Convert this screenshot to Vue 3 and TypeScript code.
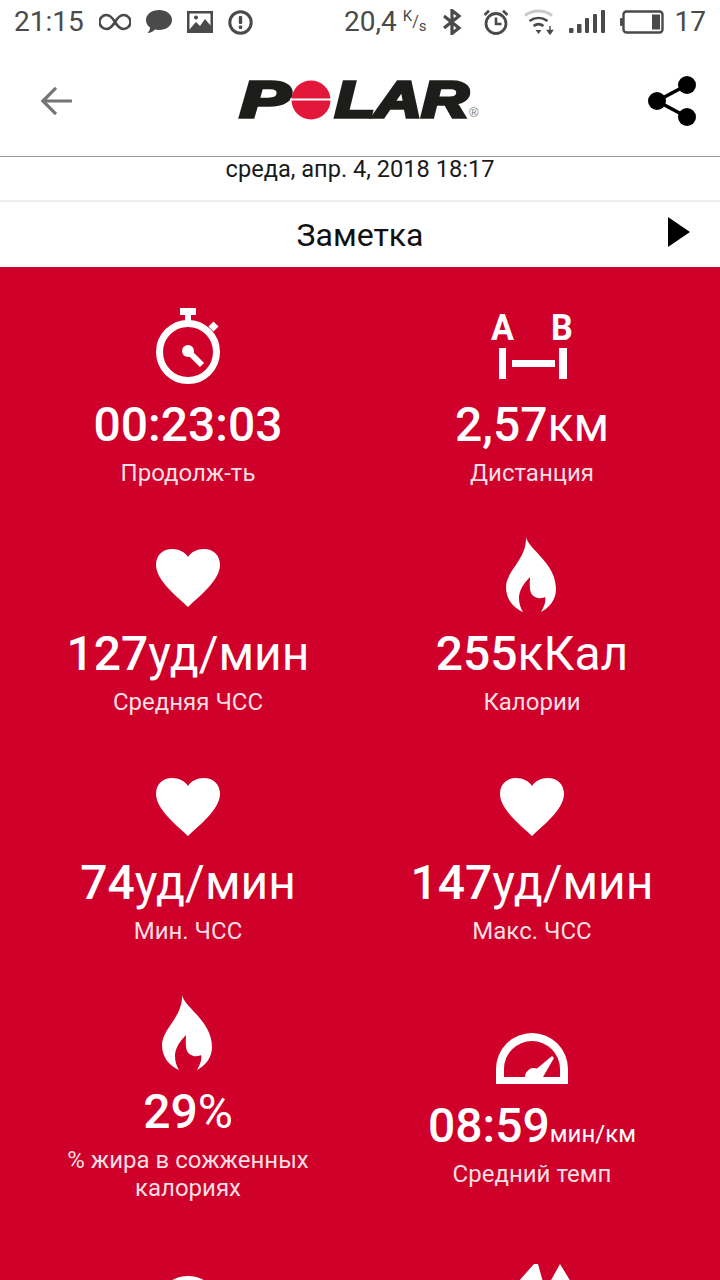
<script setup lang="ts">
interface Metric {
  icon: string;
  value?: string;
  unit?: string;
  smallUnit?: boolean;
  label?: string;
}

const metrics: Metric[] = [
  { icon: "watch", value: "00:23:03", label: "Продолж-ть" },
  { icon: "dist", value: "2,57", unit: "км", label: "Дистанция" },
  { icon: "heart", value: "127", unit: "уд/мин", label: "Средняя ЧСС" },
  { icon: "flame", value: "255", unit: "кКал", label: "Калории" },
  { icon: "heart", value: "74", unit: "уд/мин", label: "Мин. ЧСС" },
  { icon: "heart", value: "147", unit: "уд/мин", label: "Макс. ЧСС" },
  { icon: "flame", value: "29", unit: "%", label: "% жира в сожженных калориях" },
  { icon: "gauge", value: "08:59", unit: "мин/км", smallUnit: true, label: "Средний темп" },
  { icon: "ring" },
  { icon: "peaks" },
];
</script>

<template>
  <div class="screen">
    <div class="status">
      <div class="status-left">
        <span class="status-text">21:15</span>
        <svg class="ic" width="32" height="20" viewBox="0 0 32 20" fill="none" stroke="#4a4a4a" stroke-width="2.6">
          <path d="M16 10C13 5 10 3 7.500 3A7 7 0 0 0 7.500 17C10 17 13 15 16 10C19 5 22 3 24.500 3A7 7 0 0 1 24.500 17C22 17 19 15 16 10Z" />
        </svg>
        <svg class="ic" width="26" height="26" viewBox="0 0 26 26" fill="#4a4a4a">
          <path d="M13 1C20 1 26 5 26 11C26 17 20 21 13 21C11.500 21 10 20.800 9 20.500C7 22.500 4.500 24 1.500 24C3 22.500 4 20.500 4 18.500C1.500 16.500 0 14 0 11C0 5 6 1 13 1Z" />
        </svg>
        <svg class="ic" width="26" height="22" viewBox="0 0 26 22">
          <path fill="#4a4a4a" fill-rule="evenodd" d="M0 0H26V22H0ZM2.500 2.500V19.500H23.500V2.500Z" />
          <path fill="#4a4a4a" d="M2 19L9 11L13 15L18 8L24 15V20H2Z" />
          <circle cx="9" cy="6.500" r="2" fill="#4a4a4a" />
        </svg>
        <svg class="ic" width="25" height="25" viewBox="0 0 25 25">
          <circle cx="12.500" cy="12.500" r="10.700" fill="none" stroke="#4a4a4a" stroke-width="3" />
          <rect x="10.800" y="6" width="3.400" height="8" rx="1" fill="#4a4a4a" />
          <rect x="10.800" y="15.500" width="3.400" height="3.400" rx="1" fill="#4a4a4a" />
        </svg>
      </div>
      <div class="status-right">
        <span class="status-text speed">20,4<span class="speed-unit"><sup>K</sup>/<sub>s</sub></span></span>
        <svg class="ic" width="20" height="26" viewBox="0 0 20 26" fill="none" stroke="#4a4a4a" stroke-width="3.200">
          <path d="M2 7L17 19L10 24.500V1.500L17 7L2 19" />
        </svg>
        <svg class="ic alarm" width="26" height="26" viewBox="0 0 26 26" fill="none" stroke="#4a4a4a">
          <circle cx="13" cy="14.500" r="10" stroke-width="2.800" />
          <path d="M13 8.500V15H18.500" stroke-width="2.600" />
          <path d="M1.500 6L6 1.800M24.500 6L20 1.800" stroke-width="2.600" />
        </svg>
        <svg class="ic" width="30" height="26" viewBox="0 0 30 26" fill="none">
          <path d="M1 6.500C9 0.500 20 0.500 28 6.500" stroke="#c9c9c9" stroke-width="3" />
          <path d="M5.500 12C11 8 18 8 23.500 12M9.500 17C12.500 14.800 16.500 14.800 19.500 17" stroke="#4a4a4a" stroke-width="2.600" />
          <path d="M11.500 21H17.500L14.500 25Z" fill="#4a4a4a" />
          <path d="M26 17V23M23.500 21.500H28.500L26 25Z" stroke="#4a4a4a" stroke-width="1.400" fill="#4a4a4a" />
        </svg>
        <svg class="ic" width="36" height="24" viewBox="0 0 36 24" fill="#4a4a4a">
          <rect x="0" y="18" width="4.500" height="5" rx="1" />
          <rect x="8" y="14" width="4.500" height="9" rx="1" />
          <rect x="16" y="8" width="4" height="15" rx="1" />
          <rect x="24" y="4" width="4" height="19" rx="1" />
          <rect x="32" y="0" width="4" height="23" rx="1" />
        </svg>
        <svg class="ic" width="44" height="24" viewBox="0 0 44 24">
          <rect x="3.500" y="1.500" width="39" height="21" rx="3" fill="none" stroke="#4a4a4a" stroke-width="2.400" />
          <rect x="0" y="8" width="3" height="8" rx="1" fill="#4a4a4a" />
          <rect x="32" y="4.500" width="8" height="15" fill="#4a4a4a" />
        </svg>
        <span class="status-text batt-level">17</span>
      </div>
    </div>

    <header class="topbar">
      <svg class="back" width="32" height="30" viewBox="0 0 34 32" fill="none" stroke="#757575" stroke-width="3.400">
        <path d="M34 16H3M17 2L3 16L17 30" />
      </svg>
      <svg class="logo" width="240" height="44" viewBox="0 0 240 44">
        <text transform="translate(0 38) scale(1.500 1)" class="logo-text">P</text>
        <circle cx="71" cy="21" r="19.500" fill="#e2173a" />
        <rect x="50" y="19.500" width="42" height="2" fill="#fff" />
        <text transform="translate(95 38) scale(1.300 1)" class="logo-text">LAR</text>
        <text x="229" y="38" class="logo-mark">®</text>
      </svg>
      <svg class="share" width="48" height="50" viewBox="0 0 48 50" fill="#000">
        <circle cx="39" cy="9" r="9" />
        <circle cx="9" cy="25" r="9" />
        <circle cx="39" cy="41" r="9" />
        <path d="M39 9L9 25L39 41" fill="none" stroke="#000" stroke-width="3.500" />
      </svg>
    </header>

    <div class="date-row">среда, апр. 4, 2018 18:17</div>

    <div class="note-row">
      <span>Заметка</span>
      <svg class="note-arrow" width="22" height="30" viewBox="0 0 22 30"><path d="M0 0L22 15L0 30Z" /></svg>
    </div>

    <main class="grid">
      <div v-for="(m, i) in metrics" :key="i" class="cell">
        <svg class="cell-icon" width="80" height="80" viewBox="0 0 80 80">
          <template v-if="m.icon === 'watch'">
            <circle cx="40" cy="46" r="28.500" fill="none" stroke="#fff" stroke-width="7" />
            <rect x="32" y="2" width="16" height="7" fill="#fff" />
            <rect x="37" y="9" width="6" height="10" fill="#fff" />
            <path d="M63 23L68 18" stroke="#fff" stroke-width="7" />
            <circle cx="40" cy="45" r="6" fill="#fff" />
            <path d="M40 45L54 59" stroke="#fff" stroke-width="6" />
          </template>
          <template v-else-if="m.icon === 'dist'">
            <text transform="translate(-1 34) scale(0.950 1)" class="ab">A</text>
            <text transform="translate(59 34) scale(0.950 1)" class="ab">B</text>
            <rect x="7" y="42" width="7" height="31" fill="#fff" />
            <rect x="67" y="42" width="8" height="31" fill="#fff" />
            <rect x="20" y="54" width="43" height="7" fill="#fff" />
          </template>
          <path v-else-if="m.icon === 'heart'" fill="#fff" d="M40 72C32 64 8 46 8 30C8 20 15 14 24 14C31 14 37 17 40 22C43 17 49 14 56 14C65 14 72 20 72 30C72 46 48 64 40 72Z" />
          <path v-else-if="m.icon === 'flame'" fill="#fff" d="M34 2C36 14 64 28 64 54C64 65 57 73 49 77C53 70 54 66 53 62C50 64 42 64 39 58C37 52 38 46 38 42C31 49 27 56 27 63C27 68 28 72 31 77C22 73 14 65 14 52C14 36 35 24 34 2Z" />
          <template v-else-if="m.icon === 'gauge'">
            <path fill="#fff" fill-rule="evenodd" d="M4 77V62A36 36 0 0 1 76 62V77ZM12 70H68V62A28 28 0 0 0 12 62Z" />
            <path fill="#fff" d="M33 70A9 9 0 0 1 45 61.500L60 49L62 51L51 70Z" />
          </template>
          <circle v-else-if="m.icon === 'ring'" cx="40" cy="58" r="29" fill="none" stroke="#fff" stroke-width="6" />
          <path v-else fill="#fff" d="M42 14H46L51 32H26ZM68 14L79 32H58Z" />
        </svg>
        <div v-if="m.value" class="value">
          <span class="num">{{ m.value }}</span><span class="unit" :class="{ small: m.smallUnit }">{{ m.unit }}</span>
        </div>
        <div v-if="m.label" class="label">{{ m.label }}</div>
      </div>
    </main>
  </div>
</template>

<style scoped>
.screen {
  width: 720px;
  height: 1280px;
  overflow: hidden;
  background: #fff;
  font-family: Roboto, "Noto Sans", sans-serif;
  display: flex;
  flex-direction: column;
}
.status {
  height: 45px;
  flex: none;
  display: flex;
  align-items: center;
  justify-content: space-between;
  padding: 0 14px 1px;
  box-sizing: border-box;
  color: #4a4a4a;
}
.status-left,
.status-right {
  display: flex;
  align-items: center;
  gap: 15px;
}
.status-text {
  font-size: 28px;
  line-height: 44px;
  white-space: nowrap;
}
.batt-level {
  margin-left: -4px;
}
.speed {
  display: flex;
  align-items: center;
  gap: 6px;
}
.speed-unit {
  font-size: 16px;
  line-height: 1;
}
.speed-unit sup,
.speed-unit sub {
  font-size: 15px;
  line-height: 0;
}
.alarm {
  margin-left: 6px;
}
.topbar {
  height: 112px;
  flex: none;
  box-sizing: border-box;
  display: flex;
  align-items: center;
  justify-content: space-between;
  padding: 0 24px 0 40px;
  border-bottom: 1px solid #9a9a9a;
}
.logo {
  overflow: visible;
}
.logo-text {
  font-family: "Liberation Sans", sans-serif;
  font-weight: 700;
  font-style: italic;
  font-size: 50px;
  fill: #1d1d1b;
  stroke: #1d1d1b;
  stroke-width: 3.500px;
}
.logo-mark {
  font-family: "Liberation Sans", sans-serif;
  font-size: 13px;
  fill: #777;
}
.date-row {
  height: 45px;
  flex: none;
  box-sizing: border-box;
  text-align: center;
  font-size: 23.600px;
  line-height: 24px;
  color: #1a1a1a;
  border-bottom: 2px solid #eeeeee;
}
.note-row {
  height: 65px;
  flex: none;
  box-sizing: border-box;
  display: flex;
  align-items: center;
  justify-content: center;
  font-size: 32px;
  color: #111;
  position: relative;
}
.note-arrow {
  position: absolute;
  right: 30px;
  top: 15px;
}
.grid {
  flex: none;
  background: #cf0029;
  display: grid;
  grid-template-columns: 344px 344px;
  padding: 39px 16px 40px;
  row-gap: 48px;
  align-items: center;
}
.cell {
  display: flex;
  flex-direction: column;
  align-items: center;
  color: #fff;
  text-align: center;
}
.cell-icon {
  display: block;
  flex: none;
  overflow: visible;
}
.value {
  margin-top: 10px;
  height: 58px;
  line-height: 58px;
  font-size: 48px;
  white-space: nowrap;
}
.num {
  font-weight: 500;
}
.unit {
  font-weight: 400;
}
.unit.small {
  font-size: 24px;
}
.label {
  margin-top: 5px;
  font-size: 24px;
  line-height: 28px;
  font-weight: 400;
  width: 280px;
  color: #f8dfe3;
}
.ab {
  font-family: Roboto, sans-serif;
  font-weight: 700;
  font-size: 36px;
  fill: #fff;
}
</style>
